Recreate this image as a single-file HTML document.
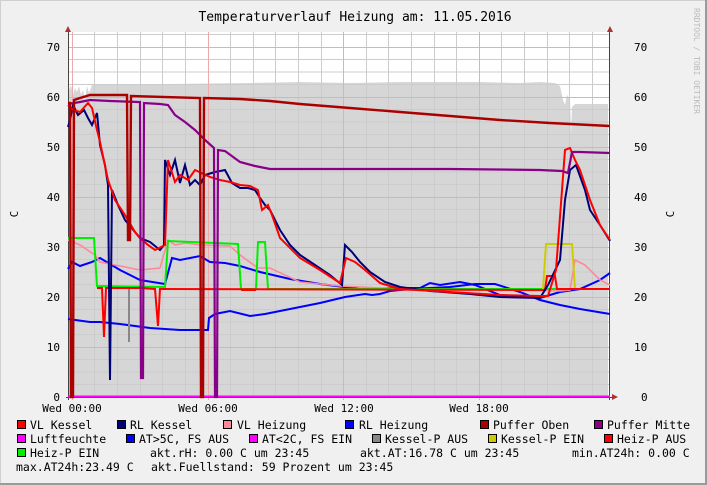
<!DOCTYPE html>
<html><head><meta charset="utf-8"><style>
html,body{margin:0;padding:0;background:#f0f0f0}
svg{display:block}
</style></head><body>
<svg width="707" height="485" xmlns="http://www.w3.org/2000/svg" font-family="DejaVu Sans Mono, Liberation Mono, monospace">
<rect x="0" y="0" width="707" height="485" fill="#f0f0f0"/>
<rect x="0.5" y="0.5" width="706" height="484" fill="none" stroke="#cfcfcf"/>
<rect x="705" y="0" width="2" height="485" fill="#9a9a9a"/>
<rect x="0" y="483" width="707" height="2" fill="#9a9a9a"/>
<text x="355" y="21" font-size="13" text-anchor="middle" fill="#000">Temperaturverlauf Heizung am: 11.05.2016</text>
<text transform="translate(694,8) rotate(90)" font-size="8" fill="#bbb">RRDTOOL / TOBI OETIKER</text>
<!-- plot bg -->
<rect x="68" y="32" width="542" height="365" fill="#fff"/>
<!-- gray area -->
<polygon fill="#d6d6d6" points="69,397 69,90 71,85 73,95 75,88 77,92 79,86 81,95 83,90 85,100 87,86 89,93 92,85 96,84 170,84 250,83 300,82 350,83 400,82 480,82 520,83 540,82 555,83 560,86 563,100 565,105 567,95 570,100 571,135 572,107 575,104 600,104 608,104 608,397"/>
<!-- grid -->
<g stroke="#cccccc" stroke-width="1">
<path d="M68,384.5H610M68,372H610M68,359.5H610M68,334.5H610M68,322H610M68,309.5H610M68,284.5H610M68,272H610M68,259.5H610M68,234.5H610M68,222H610M68,209.5H610M68,184.5H610M68,172H610M68,159.5H610M68,134.5H610M68,122H610M68,109.5H610M68,84.5H610M68,72H610M68,59.5H610M68,34.5H610"/>
<path d="M94.5,32V397M117.5,32V397M140.5,32V397M162.5,32V397M185.5,32V397M230.5,32V397M253.5,32V397M275.5,32V397M298.5,32V397M321.5,32V397M366.5,32V397M388.5,32V397M411.5,32V397M434.5,32V397M456.5,32V397M501.5,32V397M524.5,32V397M547.5,32V397M569.5,32V397M592.5,32V397"/>
</g>
<g stroke="#eeaaaa" stroke-width="1">
<path d="M68,347.5H610M68,297.5H610M68,247.5H610M68,197.5H610M68,147.5H610M68,97.5H610M68,47.5H610"/>
<path d="M72.5,32V400M208.5,32V400M343.5,32V400M479.5,32V400"/>
</g>
<!-- axes -->
<path d="M68.5,30V400M609.5,30V400M66,397.5H615" stroke="#444" stroke-width="1"/>
<polygon points="65,32 71,32 68,26" fill="#a33"/>
<polygon points="607,32 613,32 610,26" fill="#a33"/>
<polygon points="612,394 612,400 618,397" fill="#a33"/>
<!-- Luftfeuchte -->
<path d="M68,396.5H610" stroke="#ff00ff" stroke-width="2"/>
<!-- blue lower AT -->
<polyline fill="none" stroke="#0000ff" stroke-width="2" points="68,319 90,322 100,322 120,324 150,328 180,330 208,330 209,318 215,314 230,311 250,316 265,314 290,309 320,303 345,297 365,294 372,295 380,294 390,291 410,289 450,287 475,284 495,284 520,292 540,300 560,305 580,309 610,314"/>
<!-- RL Heizung -->
<polyline fill="none" stroke="#0000ff" stroke-width="2" points="68,269 72,262 80,266 92,262 96,260 100,258 110,264 120,270 130,275 140,280 165,284 172,258 180,260 190,258 200,256 210,262 225,263 240,266 260,272 290,279 320,284 360,289 400,288 420,288 430,283 440,285 460,282 475,285 500,295 540,298 560,292 580,289 600,280 610,273"/>
<!-- VL Heizung -->
<polyline fill="none" stroke="#ff8899" stroke-width="1.6" points="68,240 80,245 95,255 100,262 120,266 140,270 160,268 168,240 175,245 185,243 200,245 230,246 240,255 258,268 270,268 300,282 340,286 400,289 500,290 560,291 570,290 575,260 585,265 600,280 610,285"/>
<!-- Heiz-P EIN green -->
<polyline fill="none" stroke="#00ee00" stroke-width="2" points="68,238 94,238 97,286 165,287 168,241 238,244 241,289 256,289 258,242 265,242 268,289 610,289"/>
<!-- Kessel-P EIN -->
<polyline fill="none" stroke="#cccc00" stroke-width="2" points="543,289 546,244 572,244 575,289"/>
<!-- Kessel-P AUS gray -->
<path d="M129,289V342" stroke="#888" stroke-width="2"/>
<!-- Heiz-P AUS red -->
<polyline fill="none" stroke="#ff0000" stroke-width="2" points="97,288 102,288 104,337 106,288 140,288 155,289 158,326 160,289 163,289 545,290 547,276 555,276 557,289 610,289"/>
<!-- RL Kessel -->
<polyline fill="none" stroke="#000077" stroke-width="2" points="68,127 70,120 73,105 78,115 84,110 88,118 92,125 97,113 100,145 105,165 108,185 110,380 112,190 118,205 125,220 135,232 140,238 150,242 160,250 164,245 165,160 170,175 175,160 180,183 185,165 190,185 195,180 200,185 205,175 215,172 225,170 232,183 240,188 248,188 255,190 260,198 265,205 270,210 280,230 290,245 300,255 315,265 330,275 342,285 345,245 352,252 360,262 370,272 385,282 400,287 430,291 470,294 500,297 540,298 548,285 560,260 565,200 570,170 576,165 585,190 590,210 600,225 610,241"/>
<!-- VL Kessel -->
<polyline fill="none" stroke="#ff0000" stroke-width="2" points="68,105 73,110 80,112 88,103 92,108 97,130 100,142 108,180 115,200 125,215 135,232 140,238 148,245 155,250 165,245 168,160 175,182 180,175 188,180 195,170 210,177 220,180 230,182 240,185 250,186 258,190 262,210 268,205 272,215 280,238 300,258 320,270 340,283 346,258 355,262 365,270 380,283 400,289 450,292 500,295 540,296 548,296 556,270 565,150 570,148 575,160 580,170 590,200 600,225 610,240"/>
<path d="M241,290H256" stroke="#ff0000" stroke-width="2"/>
<!-- Puffer Mitte -->
<polyline fill="none" stroke="#880088" stroke-width="2.2" points="68,104 80,102 90,100 110,101 138,102 140,102 141,378 143,378 144,103 160,104 168,105 175,115 185,122 195,130 205,140 214,148 215,397 217,397 218,150 225,151 240,162 255,166 270,169 300,169 350,169 450,169 540,170 562,171 568,173 572,152 580,152 610,153"/>
<!-- Puffer Oben -->
<polyline fill="none" stroke="#aa0000" stroke-width="2.4" points="68,103 70,103 71,397 73,397 74,100 80,98 90,95 110,95 127,95 128,240 130,240 131,96 200,98 201,397 203,397 204,98 240,99 270,101 300,104 350,108 400,112 450,116 500,120 550,123 610,126"/>
<!-- y labels -->
<g font-size="11" fill="#000">
<text x="60" y="51" text-anchor="end">70</text><text x="60" y="101" text-anchor="end">60</text><text x="60" y="151" text-anchor="end">50</text><text x="60" y="201" text-anchor="end">40</text><text x="60" y="251" text-anchor="end">30</text><text x="60" y="301" text-anchor="end">20</text><text x="60" y="351" text-anchor="end">10</text><text x="60" y="401" text-anchor="end">0</text>
<text x="634" y="51">70</text><text x="634" y="101">60</text><text x="634" y="151">50</text><text x="634" y="201">40</text><text x="634" y="251">30</text><text x="634" y="301">20</text><text x="634" y="351">10</text><text x="641" y="401">0</text>
<text transform="translate(18,214) rotate(-90)" text-anchor="middle">C</text>
<text transform="translate(674,214) rotate(-90)" text-anchor="middle">C</text>
<text x="72" y="412" text-anchor="middle">Wed 00:00</text>
<text x="208" y="412" text-anchor="middle">Wed 06:00</text>
<text x="344" y="412" text-anchor="middle">Wed 12:00</text>
<text x="479" y="412" text-anchor="middle">Wed 18:00</text>
</g>
<!-- legend -->
<g stroke="#000" stroke-width="1">
<rect x="17.5" y="420.5" width="8" height="8" fill="#ff0000"/>
<rect x="117.5" y="420.5" width="8" height="8" fill="#000077"/>
<rect x="223.5" y="420.5" width="8" height="8" fill="#ff8899"/>
<rect x="345.5" y="420.5" width="8" height="8" fill="#0000ff"/>
<rect x="480.5" y="420.5" width="8" height="8" fill="#aa0000"/>
<rect x="594.5" y="420.5" width="8" height="8" fill="#880088"/>
<rect x="17.5" y="434.5" width="8" height="8" fill="#ff00ff"/>
<rect x="126.5" y="434.5" width="8" height="8" fill="#0000ff"/>
<rect x="249.5" y="434.5" width="8" height="8" fill="#ff00ff"/>
<rect x="372.5" y="434.5" width="8" height="8" fill="#888"/>
<rect x="488.5" y="434.5" width="8" height="8" fill="#cccc00"/>
<rect x="604.5" y="434.5" width="8" height="8" fill="#ff0000"/>
<rect x="17.5" y="448.5" width="8" height="8" fill="#00ee00"/>
</g>
<g font-size="11.5" fill="#000" xml:space="preserve">
<text x="30" y="429">VL Kessel</text>
<text x="130" y="429">RL Kessel</text>
<text x="237" y="429">VL Heizung</text>
<text x="359" y="429">RL Heizung</text>
<text x="493" y="429">Puffer Oben</text>
<text x="607" y="429">Puffer Mitte</text>
<text x="30" y="443">Luftfeuchte</text>
<text x="139" y="443">AT&gt;5C, FS AUS</text>
<text x="262" y="443">AT&lt;2C, FS EIN</text>
<text x="385" y="443">Kessel-P AUS</text>
<text x="501" y="443">Kessel-P EIN</text>
<text x="617" y="443">Heiz-P AUS</text>
<text x="30" y="457">Heiz-P EIN</text>
<text x="150" y="457">akt.rH: 0.00 C um 23:45</text>
<text x="360" y="457">akt.AT:16.78 C um 23:45</text>
<text x="572" y="457">min.AT24h: 0.00 C</text>
<text x="16" y="471">max.AT24h:23.49 C</text>
<text x="151" y="471">akt.Fuellstand:   59 Prozent um 23:45</text>
</g>
</svg>
</body></html>
